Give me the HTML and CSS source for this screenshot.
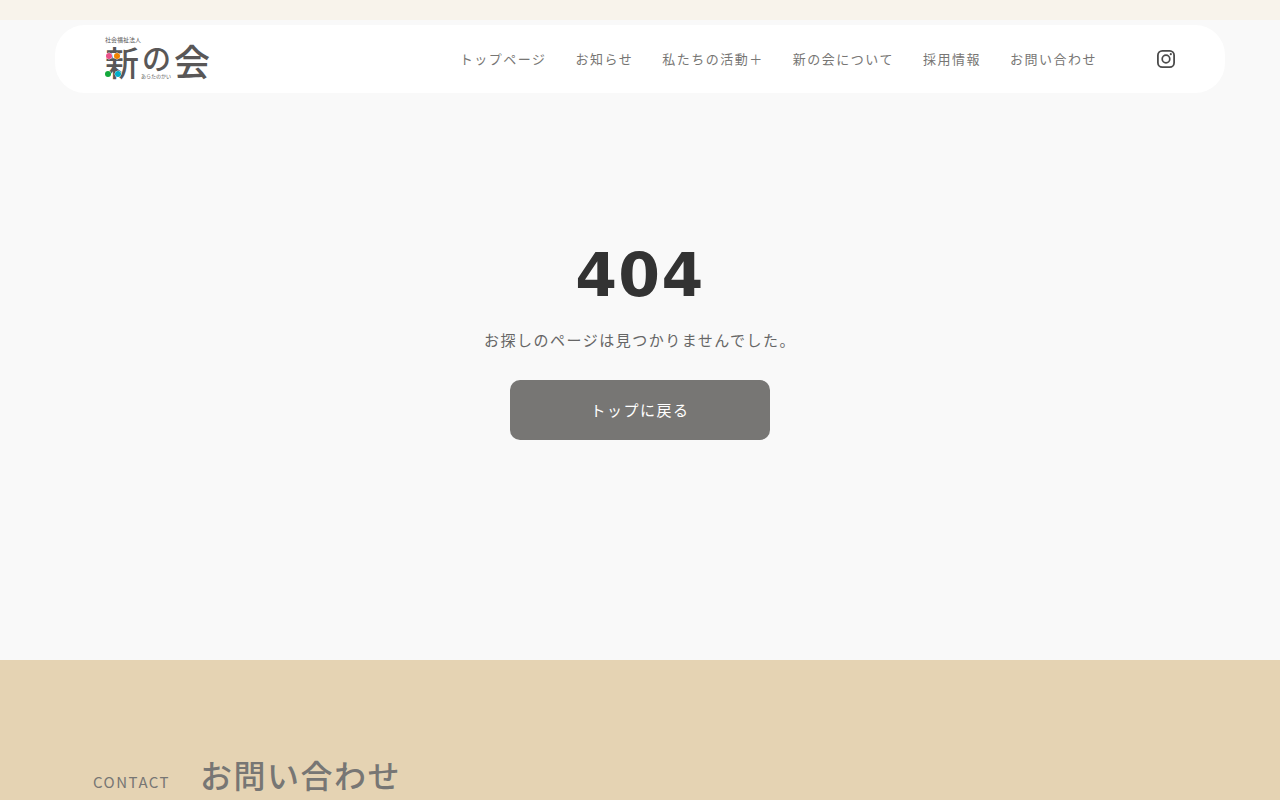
FILE: index.html
```html
<!DOCTYPE html>
<html lang="ja">
<head>
    <meta charset="UTF-8">
    <meta name="viewport" content="width=device-width, initial-scale=1.0">
    <title>404 | 社会福祉法人 新の会</title>
    <link rel="stylesheet" href="styles.css">
</head>
<body>

    <div class="top-band"></div>

    <header class="header">
        <a href="#" class="logo" aria-label="社会福祉法人 新の会">
            <svg class="logo-svg" width="106" height="44" viewBox="0 0 106 44">
                <text x="0" y="5" class="logo-corp">社会福祉法人</text>
                <text x="0" y="39" class="logo-shin">新</text>
                <text x="37" y="33" class="logo-no">の</text>
                <text x="69" y="39" class="logo-kai">会</text>
                <text x="36" y="41" class="logo-kana">あらたのかい</text>
                <g class="logo-dots">
                    <circle cx="4" cy="19" r="3" fill="#ea5088"/>
                    <circle cx="12" cy="19" r="3" fill="#f08300"/>
                    <circle cx="3" cy="37" r="3" fill="#13a83b"/>
                    <circle cx="13" cy="37" r="3" fill="#00aecb"/>
                </g>
            </svg>
        </a>

        <nav class="nav">
            <ul class="nav-list">
                <li><a href="#">トップページ</a></li>
                <li><a href="#">お知らせ</a></li>
                <li><a href="#">私たちの活動＋</a></li>
                <li><a href="#">新の会について</a></li>
                <li><a href="#">採用情報</a></li>
                <li><a href="#">お問い合わせ</a></li>
            </ul>
            <a href="#" class="instagram" aria-label="Instagram">
                <svg width="18" height="18" viewBox="0 0 18 18" fill="none" stroke="#4b4b4b">
                    <rect x="0.9" y="0.9" width="16.2" height="16.2" rx="4.4" stroke-width="1.8"/>
                    <circle cx="9" cy="9" r="3.8" stroke-width="1.7"/>
                    <circle cx="13.8" cy="4.2" r="1.1" fill="#4b4b4b" stroke="none"/>
                </svg>
            </a>
        </nav>
    </header>

    <main class="not-found">
        <h1>404</h1>
        <p>お探しのページは見つかりませんでした。</p>
        <a href="#" class="back-button">トップに戻る</a>
    </main>

    <section class="contact">
        <h2 class="contact-title">
            <span class="contact-en">CONTACT</span>
            <span class="contact-ja">お問い合わせ</span>
        </h2>
    </section>

</body>
</html>
```
FILE: styles.css
```css
* {
    box-sizing: border-box;
}

body {
    margin: 0;
    font-family: 'Noto Sans CJK JP', sans-serif;
    font-size: 15px;
    letter-spacing: 0.1em;
    color: #777674;
    background: #f9f9f9;
}

a {
    color: inherit;
    text-decoration: none;
}

.top-band {
    height: 20px;
    background: #f8f3eb;
}

/* ヘッダー */
.header {
    display: flex;
    justify-content: space-between;
    align-items: center;
    height: 68px;
    margin: 5px 55px 0;
    padding: 0 50px;
    background: #fff;
    border-radius: 30px;
}

.logo-svg {
    display: block;
    overflow: visible;
    letter-spacing: 0;
    fill: #595757;
}

.logo-corp {
    font-size: 6px;
}

.logo-kana {
    font-size: 5px;
}

.logo-shin {
    font-size: 34px;
    font-weight: 500;
}

.logo-no {
    font-size: 29px;
    font-weight: 500;
}

.logo-kai {
    font-size: 36px;
    font-weight: 500;
}

.logo-dots circle {
    stroke: #fff;
    stroke-width: 1;
    paint-order: stroke;
}

.nav {
    display: flex;
    align-items: center;
    gap: 60px;
}

.nav-list {
    display: flex;
    gap: 29px;
    margin: 0;
    padding: 0 0 2px;
    list-style: none;
    font-size: 13px;
    white-space: nowrap;
}

.instagram svg {
    display: block;
}

/* 404 */
.not-found {
    display: flex;
    flex-direction: column;
    align-items: center;
    padding: 147px 20px 220px;
}

.not-found h1 {
    margin: 0;
    font-family: 'DejaVu Sans', sans-serif;
    font-size: 60px;
    line-height: 70px;
    color: #333;
}

.not-found p {
    margin: 19px 0 30px;
    line-height: 21px;
    color: #666;
}

.back-button {
    width: 260px;
    max-width: 100%;
    line-height: 60px;
    text-align: center;
    color: #fff;
    background: #777674;
    border-radius: 10px;
}

/* お問い合わせ */
.contact {
    padding: 91px 93px;
    background: #e5d3b3;
}

.contact-title {
    display: flex;
    align-items: baseline;
    gap: 30px;
    margin: 0;
    font-weight: 400;
}

.contact-en {
    font-size: 15px;
}

.contact-ja {
    font-size: 32px;
    font-weight: 500;
}
```
